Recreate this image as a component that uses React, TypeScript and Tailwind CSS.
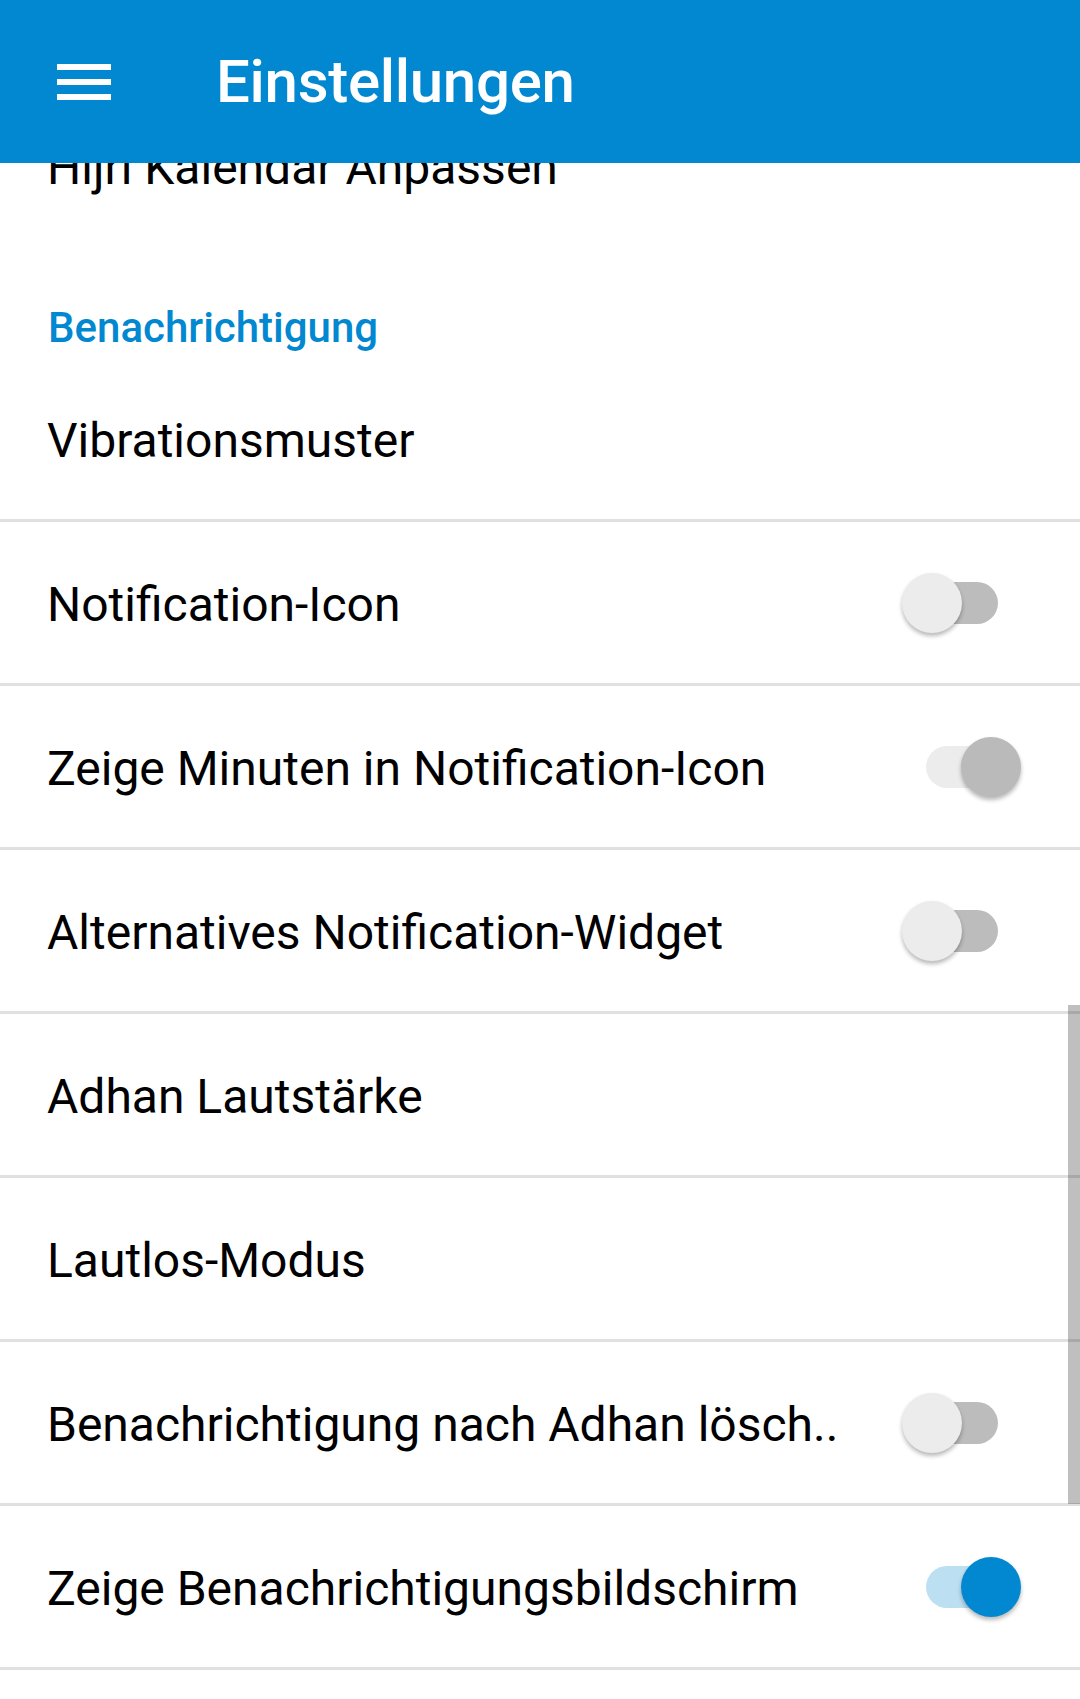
import React from "react";

type SwitchState = "off" | "onGrey" | "onBlue";

interface RowItem {
  label: string;
  toggle?: SwitchState;
}

const items: RowItem[] = [
  { label: "Vibrationsmuster" },
  { label: "Notification-Icon", toggle: "off" },
  { label: "Zeige Minuten in Notification-Icon", toggle: "onGrey" },
  { label: "Alternatives Notification-Widget", toggle: "off" },
  { label: "Adhan Lautstärke" },
  { label: "Lautlos-Modus" },
  { label: "Benachrichtigung nach Adhan lösch..", toggle: "off" },
  { label: "Zeige Benachrichtigungsbildschirm", toggle: "onBlue" },
];

const Switch = ({ state }: { state: SwitchState }) => {
  const track =
    state === "off"
      ? "bg-[#bcbcbc]"
      : state === "onGrey"
        ? "bg-[#ececec]"
        : "bg-[#bcdff2]";
  const thumb =
    state === "off"
      ? "left-[-24px] bg-[#ececec]"
      : state === "onGrey"
        ? "left-[35px] bg-[#bababa]"
        : "left-[35px] bg-[#0288d1]";

  return (
    <div className="relative w-[72px] h-[60px] shrink-0">
      <div className={`absolute left-0 top-[9px] w-[72px] h-[42px] rounded-full ${track}`}></div>
      <div
        className={`absolute top-0 w-[60px] h-[60px] rounded-full shadow-[0_3px_4px_rgba(0,0,0,0.28)] ${thumb}`}
      ></div>
    </div>
  );
};

const Row = ({ item }: { item: RowItem }) => (
  <div>
    <div className="flex items-center justify-between h-[161px] pl-[47px] pr-[82px]">
      <span className="mt-[4px] text-[48px] leading-none text-black whitespace-nowrap">
        {item.label}
      </span>
      {item.toggle && <Switch state={item.toggle} />}
    </div>
    <div className="h-[3px] bg-[#e0e0e0]"></div>
  </div>
);

export default function App() {
  return (
    <div
      className="relative w-[1080px] h-[1699px] overflow-hidden bg-white flex flex-col"
      style={{ fontFamily: "Roboto, 'Noto Sans', sans-serif" }}
    >
      {/* toolbar */}
      <div className="relative z-10 h-[163px] shrink-0 bg-[#0288d1] flex items-center pl-[57px]">
        <svg width="54" height="36" viewBox="0 0 54 36" className="shrink-0">
          <rect x="0" y="0" width="54" height="6" fill="#fff" />
          <rect x="0" y="15" width="54" height="6" fill="#fff" />
          <rect x="0" y="30" width="54" height="6" fill="#fff" />
        </svg>
        <span className="ml-[105px] text-[60px] leading-none font-medium tracking-[-0.3px] text-white">
          Einstellungen
        </span>
      </div>

      {/* scrolled settings list */}
      <div className="flex-1 overflow-hidden">
        <div className="-mt-[78px]">
          <div className="flex items-center h-[161px] pl-[47px] pt-1">
            <span className="text-[48px] leading-none text-black">
              Hijri Kalendar Anpassen
            </span>
          </div>
          <div className="h-[112px] pt-[61px] pl-[48px]">
            <span className="block text-[42px] leading-[42px] font-medium text-[#0288d1]">
              Benachrichtigung
            </span>
          </div>
          {items.map((item, i) => (
            <Row key={i} item={item} />
          ))}
        </div>
      </div>

      {/* scrollbar */}
      <div className="absolute right-0 top-[1005px] w-[12px] h-[499px] bg-black/25"></div>
    </div>
  );
}
